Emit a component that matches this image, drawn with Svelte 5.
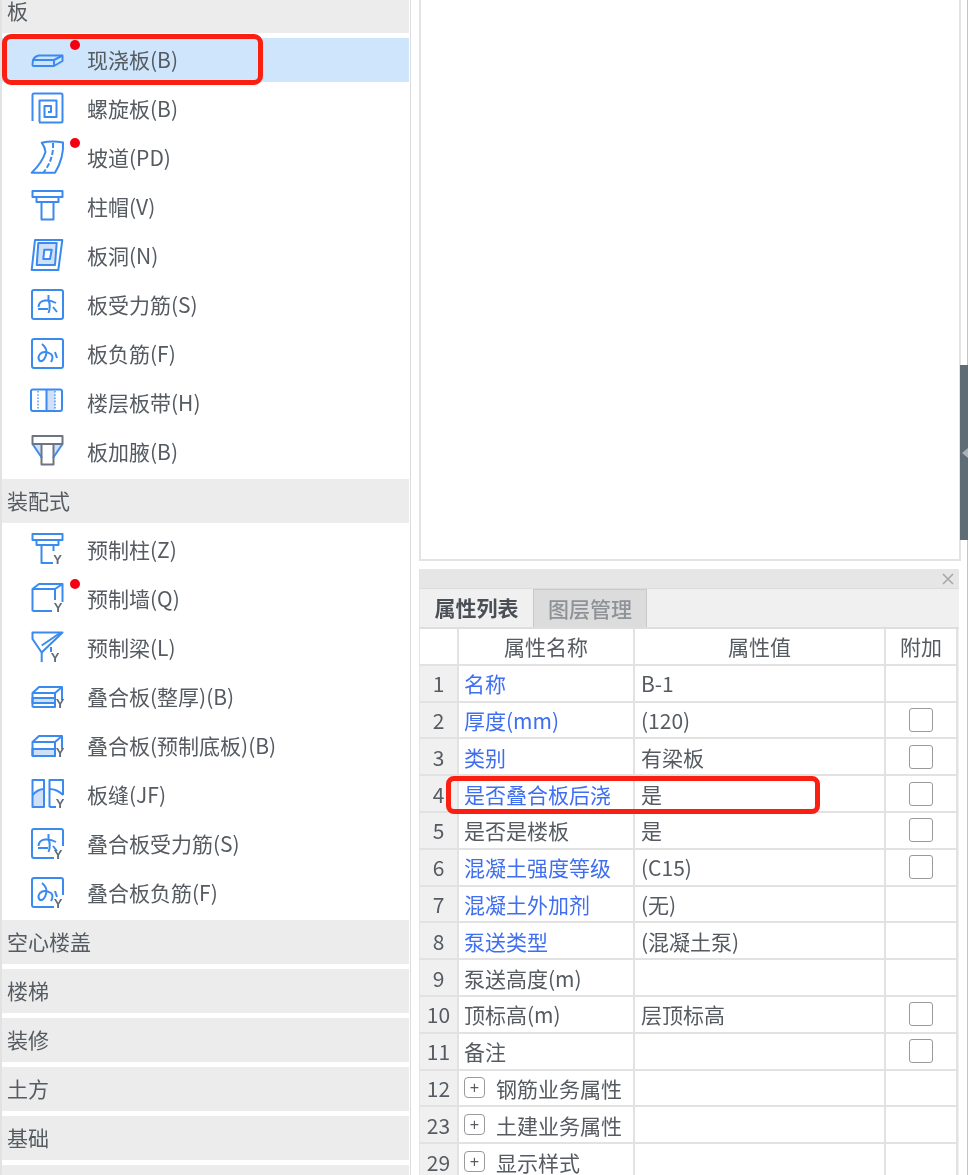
<script>
  const box = 'M4 2H31Q33 2 33 4V29Q33 31 31 31H4Q2 31 2 29V4Q2 2 4 2Z';
  const openBox = 'M24 31H4Q2 31 2 29V4Q2 2 4 2H31Q33 2 33 4V19';
  const force = ['M18.5 7V12Q21 18 18.5 25', 'M8.5 19Q9 13 15 12.5Q21 12 26 15', 'M8 21H18', 'M23 19L27 24'];
  const neg = ['M12 7Q18 12 16 18Q14 25 10 24Q7 21 10 17Q14 13 21 17Q24 20 21 25', 'M25 15L27 21'];
  const s = (d) => ({ d, c: 'st' });
  const f = (d) => ({ d, c: 'fl' });
  const g = (d) => ({ d, c: 'gr' });
  const l = (d) => ({ d, c: 'lt' });

  const groups = [
    { title: '板', items: [
      { t: '现浇板(B)', sel: true, dot: true, p: [s('M3 17Q5 13 9 12.5H32.5V18L24 23H4Q2.5 23 2.5 21.5Z'), s('M3 17H24V23'), s('M24 17L32.5 12.5')] },
      { t: '螺旋板(B)', p: [s('M2.5 29V3Q2.5 1.5 4 1.5H31Q32.5 1.5 32.5 3V29Q32.5 30.5 31 30.5H9'), s('M9.5 30V8.5H26.5V25H14.5V14H21V20H18')] },
      { t: '坡道(PD)', dot: true, p: [s('M11.7 1.7Q22 -0.5 33 1.5Q34 17 25 31.7H1.7Q12 22 15.5 11Q15 6 11.7 1.7Z'), { d: 'M23 2Q24 18 13.5 31.5', c: 'dd' }] },
      { t: '柱帽(V)', p: [s('M2.5 1H32.5V7H2.5Z'), s('M6.5 7V12H28.5V7'), s('M11.5 12V29.5H23.5V12')] },
      { t: '板洞(N)', p: [f('M8.3 4H26.7L25 26H6.7Z'), s('M5 1H32.3L28.3 31H1.7Z'), { d: 'M14.3 10.7H21.7L20 20H13.3Z', c: 'wh' }] },
      { t: '板受力筋(S)', p: [s(box), ...force.map(s)] },
      { t: '板负筋(F)', p: [s(box), ...neg.map(s)] },
      { t: '楼层板带(H)', p: [l('M16.5 4H25V25H16.5Z'), s('M3 3.5H30Q32 3.5 32 5.5V23Q32 25 30 25H3Q1 25 1 23V5.5Q1 3.5 3 3.5Z'), s('M16.5 3.5V25'), { d: 'M8 5V24M25 5V24', c: 'ds' }] },
      { t: '板加腋(B)', p: [l('M2.5 9H12V21Z'), l('M32.5 9H23V21Z'), s('M2.5 9L12 23'), s('M32.5 9L23 23'), g('M2.5 1H32.5V9H2.5Z'), g('M11.5 9V29.5H23.5V9')] }
    ] },
    { title: '装配式', items: [
      { t: '预制柱(Z)', y: [27.5, 31], p: [s('M2.5 1H32.5V7H2.5Z'), s('M6.5 7V12H28.5V7'), s('M11.5 12V30H23'), s('M23.5 12V18')] },
      { t: '预制墙(Q)', dot: true, y: [28, 30], p: [s('M2.5 29V7L9 2H32.5V20'), s('M2.5 7H25V18'), s('M25 7L32.5 2'), s('M2.5 29H22')] },
      { t: '预制梁(L)', y: [25, 31], p: [s('M2.5 1.5H32.5L11.7 21.5L2.5 8Z'), s('M11.7 21.5V31'), s('M11.7 14.5L30 2'), s('M21 16V21')] },
      { t: '叠合板(整厚)(B)', y: [30, 28], p: [f('M2.5 18H25V23H2.5Z'), s('M2.5 27V13L9 7H32V20'), s('M2.5 13H25V27H2.5'), s('M25 13L32 7')] },
      { t: '叠合板(预制底板)(B)', y: [30, 28], p: [f('M2.5 20H25V27H2.5Z'), s('M2.5 27V13L9 7H32V20'), s('M2.5 13H25V27H2.5'), s('M25 13L32 7')] },
      { t: '板缝(JF)', y: [30, 30], p: [l('M2.5 17Q8 11 14 11V29H2.5Z'), s('M2.5 2H14V29H2.5Z'), s('M2.5 17Q8 11 14 11'), s('M19.5 29V2H33V17'), s('M19.5 11Q27 11 33 17'), s('M19.5 29H26')] },
      { t: '叠合板受力筋(S)', y: [28, 32], p: [s(openBox), ...force.map(s)] },
      { t: '叠合板负筋(F)', y: [28, 32], p: [s(openBox), ...neg.map(s)] }
    ] },
    { title: '空心楼盖', items: [] },
    { title: '楼梯', items: [] },
    { title: '装修', items: [] },
    { title: '土方', items: [] },
    { title: '基础', items: [] },
    { title: '', items: [] }
  ];

  const rows = [
    { n: 1, name: '名称', val: 'B-1', blue: true },
    { n: 2, name: '厚度(mm)', val: '(120)', blue: true, cb: true },
    { n: 3, name: '类别', val: '有梁板', blue: true, cb: true },
    { n: 4, name: '是否叠合板后浇', val: '是', blue: true, cb: true },
    { n: 5, name: '是否是楼板', val: '是', cb: true },
    { n: 6, name: '混凝土强度等级', val: '(C15)', blue: true, cb: true },
    { n: 7, name: '混凝土外加剂', val: '(无)', blue: true },
    { n: 8, name: '泵送类型', val: '(混凝土泵)', blue: true },
    { n: 9, name: '泵送高度(m)', val: '' },
    { n: 10, name: '顶标高(m)', val: '层顶标高', cb: true },
    { n: 11, name: '备注', val: '', cb: true },
    { n: 12, name: '钢筋业务属性', val: '', plus: true },
    { n: 23, name: '土建业务属性', val: '', plus: true },
    { n: 29, name: '显示样式', val: '', plus: true }
  ];
</script>

<div class="page">
  <aside class="left">
    <div class="list">
      {#each groups as group}
        <div class="head">{group.title}</div>
        {#each group.items as item}
          <div class="item" class:sel={item.sel}>
            <svg class="icon" viewBox="0 0 36 34" width="36" height="34">
              {#each item.p as part}
                <path d={part.d} class={part.c} />
              {/each}
              {#if item.y}
                <text class="why" x={item.y[0]} y={item.y[1]}>Y</text>
              {/if}
            </svg>
            <span>{item.t}</span>
            {#if item.dot}<i class="dot"></i>{/if}
          </div>
        {/each}
      {/each}
    </div>
    <div class="mark mark-a"></div>
  </aside>

  <main class="right">
    <div class="canvas"></div>
    <section class="panel">
      <div class="title">
        <svg class="close" viewBox="0 0 12 12" width="12" height="12"><path d="M1 1L11 11M11 1L1 11" /></svg>
      </div>
      <div class="tabs">
        <div class="tab on">属性列表</div>
        <div class="tab">图层管理</div>
      </div>
      <div class="table">
        <div class="cell hn"></div>
        <div class="cell hc">属性名称</div>
        <div class="cell hc">属性值</div>
        <div class="cell hc last">附加</div>
        {#each rows as r}
          <div class="cell num">{r.n}</div>
          <div class="cell name" class:blue={r.blue}>
            {#if r.plus}<b class="plus">+</b>{/if}{r.name}
          </div>
          <div class="cell val">{r.val}</div>
          <div class="cell extra last">{#if r.cb}<i class="cb"></i>{/if}</div>
        {/each}
      </div>
      <div class="mark mark-b"></div>
    </section>
  </main>

  <div class="rail"><div class="grip"><i></i></div></div>
</div>

<style>
  :global(body) {
    margin: 0;
    background: #fff;
  }
  .page {
    width: 968px;
    height: 1175px;
    display: flex;
    overflow: hidden;
    font-family: "Noto Sans CJK SC", "Noto Sans", sans-serif;
    font-size: 21px;
    line-height: 30px;
    color: #555b61;
    background: #fff;
    filter: blur(0.3px);
  }
  .left {
    position: relative;
    width: 408px;
    flex: none;
    border-left: 2px solid #e2e2e2;
    border-right: 1px solid #dcdcdc;
    overflow: hidden;
  }
  .list {
    display: flex;
    flex-direction: column;
    gap: 5px;
    margin-top: -11px;
    width: 407px;
  }
  .head {
    height: 44px;
    flex: none;
    display: flex;
    align-items: center;
    padding-left: 5px;
    padding-bottom: 2px;
    background: #ececec;
    box-sizing: border-box;
  }
  .item {
    position: relative;
    height: 44px;
    flex: none;
    display: flex;
    align-items: center;
    padding-left: 28px;
  }
  .item.sel {
    background: #cfe5fb;
  }
  .item span {
    margin-left: 21px;
    margin-bottom: 3px;
    white-space: nowrap;
  }
  .icon {
    flex: none;
    overflow: visible;
  }
  .icon path {
    fill: none;
    stroke: #3a8af0;
    stroke-width: 2;
    stroke-linejoin: round;
  }
  .icon path.fl {
    fill: #cfe0f8;
  }
  .icon path.lt {
    fill: #cfe0f8;
    stroke: none;
  }
  .icon path.gr {
    stroke: #6c7683;
  }
  .icon path.wh {
    fill: #fff;
  }
  .icon path.ds {
    stroke-dasharray: 1.6 1.6;
    stroke-width: 1.3;
  }
  .icon path.dd {
    stroke-dasharray: 5 2;
  }
  .why {
    font-family: "Liberation Sans", sans-serif;
    font-size: 13px;
    font-weight: 700;
    fill: #5f6b75;
    text-anchor: middle;
  }
  .dot {
    position: absolute;
    left: 68px;
    top: 2px;
    width: 10px;
    height: 10px;
    border-radius: 50%;
    background: #f40012;
  }
  .mark {
    position: absolute;
    box-sizing: border-box;
    border: 5px solid #fb1f12;
    border-radius: 9px;
  }
  .mark-a {
    left: 0;
    top: 34px;
    width: 261px;
    height: 51px;
  }
  .right {
    width: 549px;
    flex: none;
    padding-left: 7px;
    box-sizing: border-box;
    display: flex;
    flex-direction: column;
  }
  .canvas {
    height: 561px;
    flex: none;
    box-sizing: border-box;
    width: 542px;
    margin-left: 1px;
    border: 2px solid #e3e3e3;
    border-top: 0;
    background: #fff;
  }
  .panel {
    position: relative;
    margin-top: 8px;
    margin-left: 1px;
    width: 540px;
    flex: 1;
    background: #f0f0f0;
    border-left: 1px solid #e3e3e3;
    box-sizing: border-box;
  }
  .title {
    height: 20px;
    background: #e6e6e6;
    border-bottom: 1px solid #dcdcdc;
    display: flex;
    align-items: center;
    justify-content: flex-end;
    padding-right: 5px;
    box-sizing: border-box;
  }
  .close path {
    stroke: #a8a8a8;
    stroke-width: 1.6;
    fill: none;
  }
  .tabs {
    display: flex;
    height: 40px;
    background: #f0f0f0;
    border-bottom: 2px solid #dedede;
    box-sizing: border-box;
  }
  .tab {
    width: 114px;
    display: flex;
    align-items: center;
    justify-content: center;
    padding-bottom: 2px;
    box-sizing: border-box;
    background: #dcdcdc;
    border: 1px solid #c9c9c9;
    border-bottom: 0;
    color: #8e9296;
    font-weight: 500;
  }
  .tab.on {
    width: 113px;
    background: #f0f0f0;
    border: 0;
    color: #4a4f55;
    font-weight: 700;
  }
  .table {
    display: grid;
    grid-template-columns: 39px 176px 251px 72px;
    grid-auto-rows: 36.8px;
    background: #fff;
    width: 538px;
  }
  .cell {
    box-sizing: border-box;
    display: flex;
    align-items: center;
    border-right: 2px solid #e2e2e2;
    border-bottom: 2px solid #e2e2e2;
    white-space: nowrap;
    overflow: hidden;
    background: #fff;
  }
  .hc {
    justify-content: center;
  }
  .num {
    justify-content: center;
    background: #f0f0f0;
  }
  .name {
    padding-left: 5px;
  }
  .blue {
    color: #3f6ff0;
  }
  .val {
    padding-left: 6px;
  }
  .extra {
    justify-content: center;
  }
  .cb {
    width: 24px;
    height: 24px;
    box-sizing: border-box;
    border: 1.5px solid #9a9a9a;
    border-radius: 3px;
    background: #fff;
  }
  .plus {
    width: 21px;
    height: 21px;
    flex: none;
    margin-right: 11px;
    box-sizing: border-box;
    border: 1.5px solid #9a9a9a;
    border-radius: 4px;
    display: flex;
    align-items: center;
    justify-content: center;
    font: 400 16px "Liberation Sans", sans-serif;
    color: #555b61;
  }
  .mark-b {
    left: 26px;
    top: 207px;
    width: 374px;
    height: 38px;
    border-radius: 8px;
  }
  .rail {
    flex: none;
    width: 8px;
    box-sizing: border-box;
    border-right: 1px solid #c4c4c4;
    padding-top: 365px;
  }
  .grip {
    width: 8px;
    height: 175px;
    background: #5f6b75;
    display: flex;
    align-items: center;
    justify-content: flex-end;
  }
  .grip i {
    width: 0;
    height: 0;
    border-style: solid;
    border-width: 5px 6px 5px 0;
    border-color: transparent #aab1b8 transparent transparent;
  }
</style>
